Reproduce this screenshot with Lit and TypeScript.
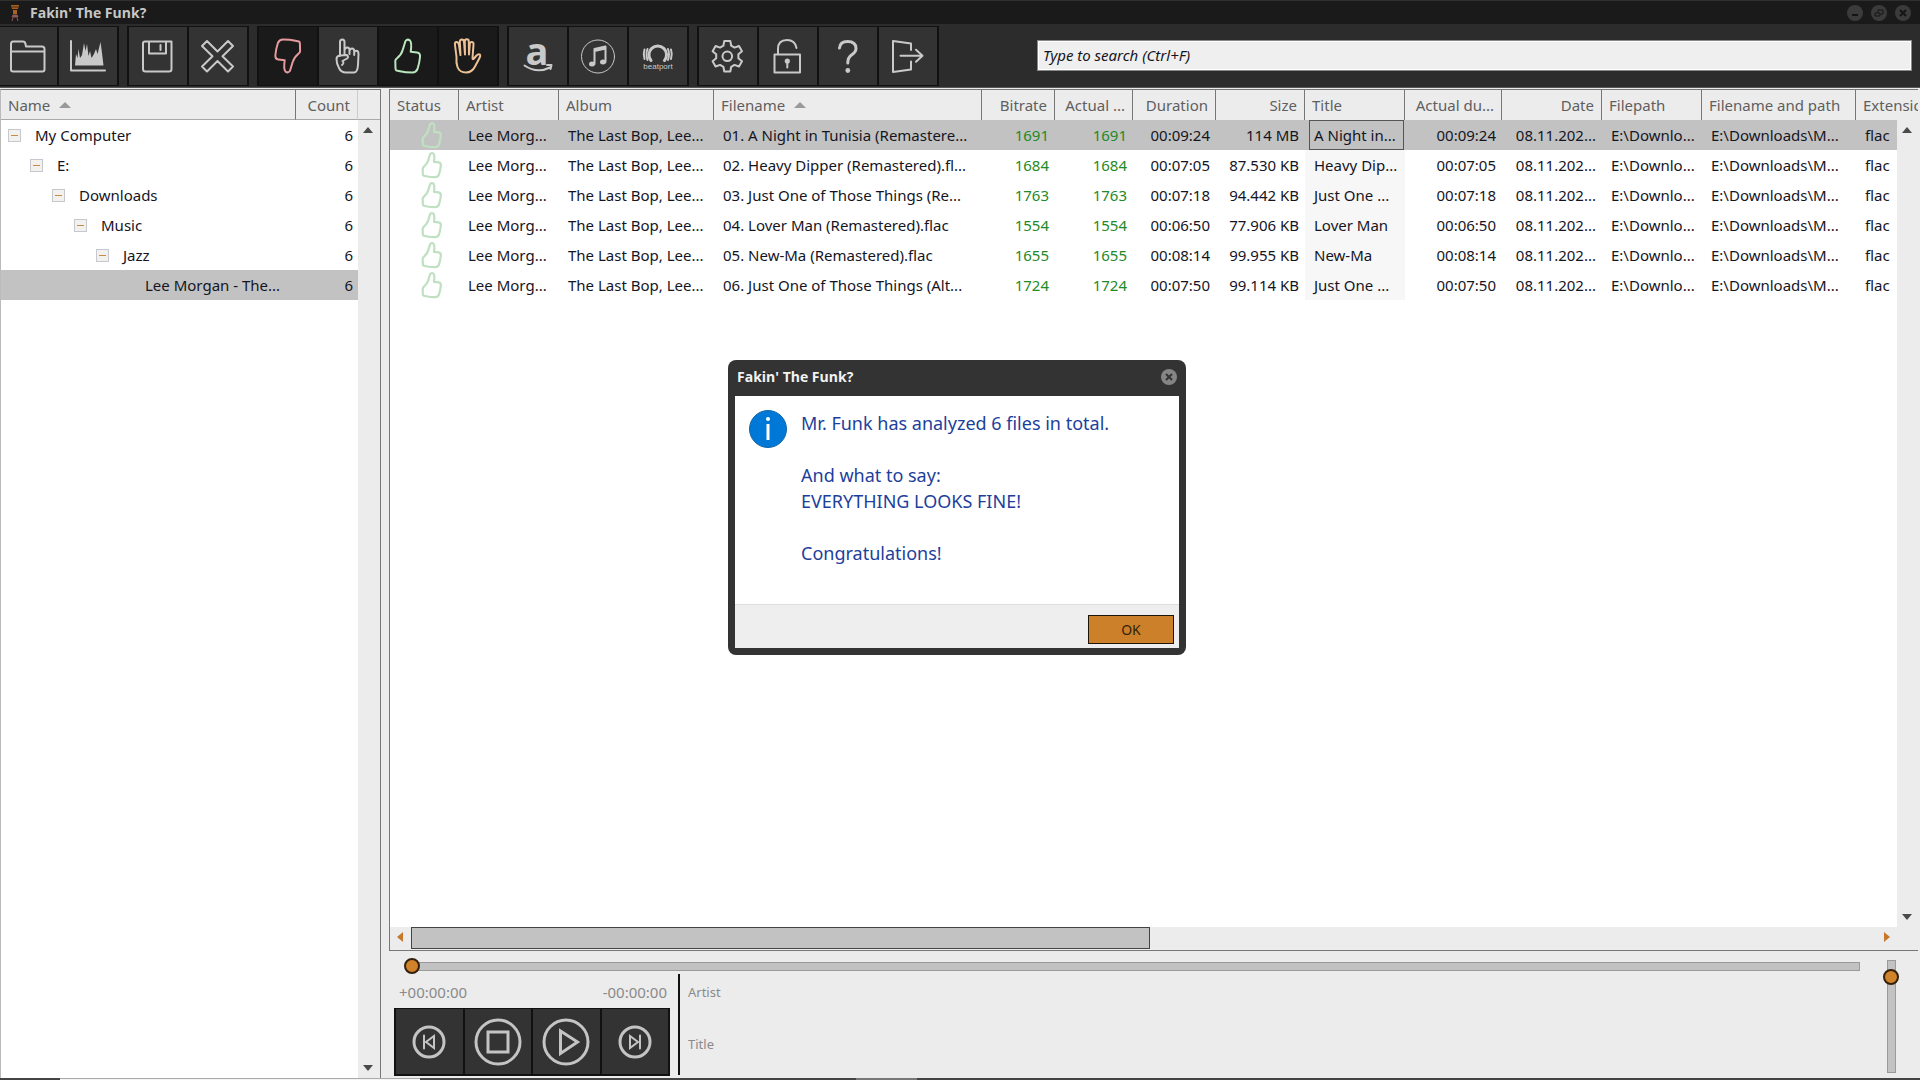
import { LitElement, html, css, svg, nothing } from "lit";
import { customElement, state } from "lit/decorators.js";
import { classMap } from "lit/directives/class-map.js";

const thumbPath = svg`<path d="M26.5 14Q28.5 11.500 31 13.500Q33 16 31.700 24.700L38 25.500Q41.500 26 41 30Q40.500 36 38.500 42Q37 45.500 33.500 45.500Q26 45.500 21 44.300L17.500 43.500Q16.500 43 16.500 41.500L16.300 34Q16.300 32.300 18 31.300Q22.500 27.500 23.700 23Z"/>`;

const icons: Record<string, unknown> = {
  folder: svg`<path d="M11 42.500V17Q11 14.500 13 14.500H23Q25 14.500 25.500 17L26 19.500H42Q44.500 19.500 44.500 22V42.500Q44.500 44.500 42.500 44.500H13Q11 44.500 11 42.500ZM11 24.500H44.500"/>`,
  spectrum: svg`<path d="M12 14V43.500H46"/><path class="solid" d="M16 38.500L17 27L18.500 31L19.500 22L21 31L23 28L25 16L26.500 24L28 17L29.500 29L31 24L32.500 31L35 27L37 22L38.500 27L41.500 15L43 26L44.500 38.500Z"/>`,
  save: svg`<path d="M16 14.500H42.500V42Q42.500 44.500 40 44.500H16.500Q14 44.500 14 42V16.500Q14 14.500 16 14.500ZM20 14.500V26.500H37V14.500M31.500 18V23"/>`,
  cross: svg`<path d="M18 14L28.500 24.500L39 14L44 19L33.500 29.300L44 39.500L39 44.500L28.500 34L18 44.500L13 39.500L23.500 29.300L13 19Z"/>`,
  down: svg`<g transform="rotate(180 28.700 29)">${thumbPath}</g>`,
  up: thumbPath,
  point: svg`<path d="M21 29V15Q21 12.500 23.300 12.500Q25.500 12.500 25.500 15V27M25.500 23Q26 20.500 28.300 20.500Q30.500 20.500 30.500 23V27M30.500 24Q31 21.500 33 21.500Q35.200 21.500 35.200 24V28M35.200 25.500Q36 23.500 37.500 23.800Q39.500 24 39.500 27L39 38Q38.500 45.500 35 45.500H27Q22 45.500 20 41Q17.500 37 17.500 32Q17.500 29 21 28.500L28 28Q30 30 28 31.500L23.500 34Q25.500 36 23 38"/>`,
  hand: svg`<path d="M17.500 30L16 18Q15.500 15 17.500 15Q19.500 15 20 18L21.500 28L20.800 15Q20.800 12.500 22.800 12.500Q24.800 12.500 25 15L26 27.500L25.800 14.500Q25.800 12.300 27.800 12.300Q29.800 12.300 29.800 14.500L30 27.500L30.800 17Q31 14.800 33 15Q34.800 15.200 34.500 17.500L33.500 31Q33.500 33 35 31.500L37.500 28.500Q39.500 26.500 41 27.500Q41.800 28.500 40.500 31L36 39.500Q33 45.500 27 45.500Q20.500 45.500 18.500 40Q17 36 17.500 30"/>`,
  amazon: svg`<text class="solid letter" x="28" y="38" text-anchor="middle">a</text><path class="mid" d="M15.500 38.500Q28 47 41 40.500M38 38L42.500 38L41.500 42"/>`,
  music: svg`<circle class="thin" cx="29" cy="29.500" r="16.500"/><path class="mid" d="M25.500 37V22L36.500 19.500V35M25.500 24L36.500 21.500"/><ellipse class="solid" cx="23" cy="37" rx="3" ry="2.500"/><ellipse class="solid" cx="34" cy="35" rx="3" ry="2.500"/>`,
  beatport: svg`<path class="heavy" d="M22 33.500A8.800 8.800 0 1 1 35.500 33.500"/><path class="mid" d="M18.500 22Q16.500 27 18.500 33M15.500 22.500Q14 27 15.500 32M39 22Q41 27 39 33M42 22.500Q43.500 27 42 32"/><text class="solid word" x="29" y="42" text-anchor="middle">beatport</text>`,
  gear: svg`<path d="M25.300 14H31.300L32.200 18.700L35.500 20.600L40 19L43 24.200L39.400 27.300V31.200L43 34.300L40 39.500L35.500 37.900L32.200 39.800L31.300 44.500H25.300L24.400 39.800L21.100 37.900L16.600 39.500L13.600 34.300L17.200 31.200V27.300L13.600 24.200L16.600 19L21.100 20.600L24.400 18.700Z"/><circle cx="28.300" cy="29.300" r="4.800"/>`,
  lock: svg`<path d="M15.500 27.500H41V45.500H15.500ZM19 27V22Q19 13 28 13Q36 13 37.500 21"/><circle class="solid" cx="28.300" cy="34" r="2.600"/><path d="M28.300 34V40.500"/>`,
  help: svg`<path class="heavy" d="M20.500 21Q21 14.500 28.500 14.500Q37 14.500 37 21.500Q37 25 32.500 28Q28.800 30.500 28.800 36"/><circle class="solid" cx="28.800" cy="43.500" r="2.400"/>`,
  exit: svg`<path d="M32 23V16.500L14 14V45L32 42.500V34.500M21.500 28.700H43M37 22.700L43.500 28.700L37 34.700"/>`,
  prev: svg`<circle cx="29" cy="29" r="15"/><path class="mid" d="M24 22.500V35.500M34 23V35L26 29Z"/>`,
  stop: svg`<circle cx="29" cy="29" r="22"/><path d="M19 19H39V39H19Z"/>`,
  play: svg`<circle cx="29" cy="29" r="22"/><path d="M23.500 18V40.500L40.500 29Z"/>`,
  next: svg`<circle cx="29" cy="29" r="15"/><path class="mid" d="M34 22.500V35.500M24 23V35L32 29Z"/>`,
};

const icon = (name: string) =>
  html`<svg class="icon" viewBox="0 0 58 58" aria-hidden="true">${icons[name]}</svg>`;

interface Tool { icon: string; label: string; tone?: string }

const toolGroups: Tool[][] = [
  [{ icon: "folder", label: "Open folder" }, { icon: "spectrum", label: "Spectrum" }],
  [{ icon: "save", label: "Save" }, { icon: "cross", label: "Remove" }],
  [
    { icon: "down", label: "Show fakes", tone: "red" },
    { icon: "point", label: "Show unsure" },
    { icon: "up", label: "Show good", tone: "green" },
    { icon: "hand", label: "Show unchecked", tone: "tan" },
  ],
  [
    { icon: "amazon", label: "Search Amazon" },
    { icon: "music", label: "Search iTunes" },
    { icon: "beatport", label: "Search Beatport" },
  ],
  [
    { icon: "gear", label: "Settings" },
    { icon: "lock", label: "License" },
    { icon: "help", label: "Help" },
    { icon: "exit", label: "Exit" },
  ],
];

const folders = ["My Computer", "E:", "Downloads", "Music", "Jazz", "Lee Morgan - The..."];

const columns = [
  { name: "Status", width: 69 },
  { name: "Artist", width: 100 },
  { name: "Album", width: 155 },
  { name: "Filename", width: 268, sorted: true },
  { name: "Bitrate", width: 73, right: true },
  { name: "Actual ...", width: 78, right: true },
  { name: "Duration", width: 83, right: true },
  { name: "Size", width: 89, right: true },
  { name: "Title", width: 100 },
  { name: "Actual du...", width: 97, right: true },
  { name: "Date", width: 100, right: true },
  { name: "Filepath", width: 100 },
  { name: "Filename and path", width: 154 },
];

const tracks = [
  { file: "01. A Night in Tunisia (Remastere...", rate: "1691", time: "00:09:24", size: "114 MB", title: "A Night in..." },
  { file: "02. Heavy Dipper (Remastered).fl...", rate: "1684", time: "00:07:05", size: "87.530 KB", title: "Heavy Dip..." },
  { file: "03. Just One of Those Things (Re...", rate: "1763", time: "00:07:18", size: "94.442 KB", title: "Just One ..." },
  { file: "04. Lover Man (Remastered).flac", rate: "1554", time: "00:06:50", size: "77.906 KB", title: "Lover Man" },
  { file: "05. New-Ma (Remastered).flac", rate: "1655", time: "00:08:14", size: "99.955 KB", title: "New-Ma" },
  { file: "06. Just One of Those Things (Alt...", rate: "1724", time: "00:07:50", size: "99.114 KB", title: "Just One ..." },
];

const sortMark = html`<svg class="sort" viewBox="0 0 12 6" aria-hidden="true"><path d="M0 6L6 0L12 6Z"/></svg>`;
const arrow = (d: string, label: string, cls = "") =>
  html`<button class="arrow ${cls}" aria-label=${label}><svg viewBox="0 0 12 12" aria-hidden="true"><path d=${d}/></svg></button>`;
const verticalBar = (what: string) => html`<div class="vbar">
  ${arrow("M1 9L6 3L11 9Z", `Scroll ${what} up`)}
  ${arrow("M1 3L6 9L11 3Z", `Scroll ${what} down`)}
</div>`;
const closeGlyph = svg`<path d="M5 5L11 11M11 5L5 11"/>`;

@customElement("app-root")
export class AppRoot extends LitElement {
  @state() private selected = 0;
  @state() private dialogOpen = true;

  static styles = css`
    :host {
      display: flex; flex-direction: column; position: relative;
      min-height: 100vh; box-sizing: border-box; overflow: hidden;
      background: #ececec; color: #15151f;
      font: 15px/20px "Noto Sans", "Open Sans", sans-serif;
    }
    * { box-sizing: border-box; }
    button, input { font: inherit; margin: 0; }
    button { padding: 0; border: 0; background: none; color: inherit; }
    svg { display: block; }

    .titlebar {
      display: flex; align-items: center; height: 24px; flex: none;
      padding: 0 9px 0 8px; background: #1a1a1a; border-top: 1px solid #303030; color: #c6c6c6;
    }
    .titlebar h1, .dialog h2 { margin: 0; font: 700 14px/20px "Open Sans", "Noto Sans", sans-serif; }
    .titlebar h1 { flex: 1; margin-left: 8px; }
    .logo { width: 14px; height: 20px; }
    .window-buttons { display: flex; gap: 8px; }
    .round { width: 16px; height: 16px; }
    .round svg { width: 16px; height: 16px; fill: #3b3b3b; stroke: #141414; stroke-width: 2; }
    .round circle { stroke: none; }

    .toolbar {
      display: flex; align-items: center; gap: 8px; height: 64px; flex: none;
      padding-right: 8px; background: #2c2c2c; border-bottom: 1px solid #555;
    }
    .group { display: flex; border: solid #111; border-width: 1px 2px 1px 0; }
    .tool { width: 60px; height: 58px; border-left: 2px solid #111; background: #333; color: #c9c9c9; }
    .group:first-child .tool:first-child { width: 57px; border-left: 0; }
    .tool.on { background: #1a1a1a; }
    .red { color: #e79a9d; }
    .green { color: #b9e6bd; }
    .tan { color: #ecc196; }
    .icon {
      width: 58px; height: 58px; margin: 0 auto; overflow: visible; fill: none; stroke: currentColor;
      stroke-width: 2; stroke-linejoin: round; stroke-linecap: round;
    }
    .tool:first-child .icon { margin-left: 0; }
    .solid { fill: currentColor; stroke: none; }
    .thin { stroke-width: 1; }
    .icon .mid { stroke-width: 2; }
    .heavy { stroke-width: 3; }
    .letter { font: 700 38px "Open Sans", sans-serif; }
    .word { font: 8px "Liberation Sans", sans-serif; }
    .search {
      flex: 1; min-width: 0; height: 31px; margin-left: 90px; padding: 0 5px 2px;
      background: #efefef; border: 1px solid #888; outline: 1px solid #fff; outline-offset: -2px;
      border-radius: 0; font-style: italic;
    }
    .search::placeholder { color: #15151f; opacity: 1; }

    .main { flex: 1; display: flex; gap: 8px; min-height: 0; padding-top: 1px; }
    .panel { display: grid; background: #fff; border: solid #777; overflow: hidden; }
    .folders { width: 381px; flex: none; grid-template: 30px 1fr / 1fr 22px; border-width: 1px 1px 0; border-left-color: #bbb; }
    .right { flex: 1; min-width: 0; display: flex; flex-direction: column; }
    .files { flex: 1; grid-template: 30px 1fr 23px / 1fr 21px; border-width: 1px 0 1px 1px; margin-right: 2px; }

    table { grid-area: 1 / 1 / 3 / 3; align-self: start; width: 100%; table-layout: fixed; border-collapse: separate; border-spacing: 0; }
    th, td { height: 30px; overflow: hidden; white-space: nowrap; text-align: left; }
    th { padding: 0 7px; background: #ececec; border-right: 1px solid #777; color: #5f5f5f; font-weight: 400; }
    th:last-child { border-right: 0; padding-right: 0; }
    th.count { border-right-color: #ccc; }
    .folders th { border-bottom: 1px solid #aaa; }
    .sort { display: inline-block; width: 12px; height: 6px; margin-left: 5px; vertical-align: 3px; fill: #999; }
    td { padding: 0 6px 0 9px; }
    .end { text-align: right; }
    th.end, td.end { padding-left: 0; }
    td.status { padding: 0 0 0 15px; }
    td.title { padding: 0; background: #f7f7f7; }
    .selected td, .selected td.title { background: #c2c2c2; }
    .title div { height: 30px; margin: 0 1px 0 4px; padding-left: 4px; border: 1px solid transparent; line-height: 28px; }
    .selected .title div { border-color: #555; }
    .rate { color: #1f8a26; }
    .mini { width: 22px; height: 28px; margin: 0 auto; fill: none; stroke: #bfe0c1; stroke-width: 3; stroke-linejoin: round; }
    .node { display: flex; align-items: center; gap: 14px; height: 30px; }
    .folders td { padding: 0 5px 0 0; }
    .expander { width: 13px; height: 13px; background: #f3f1ee; border: 1px solid #c5c9cf; display: grid; place-items: center; }
    .expander::before { content: ""; width: 7px; height: 1px; background: #c98a45; }
    .leaf { width: 13px; }

    .vbar { grid-area: 2 / 2; display: flex; flex-direction: column; justify-content: space-between; background: #ececec; }
    .arrow { width: 20px; height: 20px; display: grid; place-items: center; }
    .arrow svg { width: 12px; height: 12px; fill: #4a4a4a; }
    .arrow.orange svg { fill: #c8782a; }
    .hbar { grid-area: 3 / 1 / 4 / 3; display: grid; grid-template-columns: 21px 1fr 20px 21px; background: #ececec; }
    .track { display: grid; grid-template-columns: 61fr 60fr; }
    .thumb { height: 22px; background: #c2c2c2; border: 1px solid #444; }

    .player { height: 127px; flex: none; display: grid; grid-template-columns: 1fr 60px; }
    .deck { display: flex; flex-direction: column; padding-left: 5px; }
    .seek, .volume { appearance: none; cursor: default; }
    .seek {
      height: 16px; margin: 7px 0 0 10px;
      background:
        linear-gradient(#c2c2c2, #c2c2c2) 8px 50% / calc(100% - 9px) 7px no-repeat,
        linear-gradient(#9a9a9a, #9a9a9a) 8px 50% / calc(100% - 8px) 9px no-repeat;
    }
    .volume {
      writing-mode: vertical-lr; direction: rtl; width: 16px; height: 113px; margin: 9px 0 0 23px;
      background:
        linear-gradient(#c2c2c2, #c2c2c2) 50% 50% / 7px calc(100% - 2px) no-repeat,
        linear-gradient(#9a9a9a, #9a9a9a) 50% 50% / 9px 100% no-repeat;
    }
    .seek::-webkit-slider-thumb, .volume::-webkit-slider-thumb {
      appearance: none; width: 16px; height: 16px; border: 2px solid #33210c; border-radius: 50%; background: #d0832a;
    }
    .transport { display: flex; gap: 8px; }
    .controls { width: 276px; }
    .times { display: flex; justify-content: space-between; height: 34px; padding: 8px 3px 0 5px; color: #8a8a8a; }
    .keys { display: flex; border: 2px solid #111; border-left: 0; border-top-width: 1px; }
    .key { flex: 1; height: 65px; border-left: 2px solid #111; background: #333; color: #c4c4c4; }
    .key .icon { stroke-width: 3; stroke-linejoin: miter; }
    .tags { display: flex; flex-direction: column; gap: 32px; height: 101px; padding: 8px 0 0 8px; border-left: 2px solid #111; color: #8a8a8a; font-size: 13px; }

    .bottom { display: flex; height: 2px; flex: none; background: #444; }
    .bottom i:nth-child(1) { width: 60px; }
    .bottom i:nth-child(2) { width: 360px; background: #f4f4f4; border-top: 1px solid #aaa; }
    .bottom i:nth-child(3) { width: 436px; }
    .bottom i:nth-child(4) { width: 61px; background: #777; }

    .overlay { position: absolute; inset: 0; display: grid; place-items: center; padding: 0 6px 65px 0; }
    .dialog { width: 458px; padding: 0 7px 7px; background: #333; border-radius: 8px; }
    .dialog header { display: flex; align-items: center; justify-content: space-between; height: 36px; padding: 0 2px 2px; }
    .dialog h2 { color: #f2f2f2; }
    .dialog .round svg { fill: #858585; stroke: #333; }
    .message { display: flex; gap: 14px; height: 208px; padding: 14px; background: #fff; color: #1d3f9c; font-size: 18px; line-height: 26px; }
    .message p { margin: 0 0 26px; }
    .info { width: 38px; height: 38px; flex: none; }
    .dialog footer { display: flex; justify-content: flex-end; height: 44px; padding: 10px 5px 0; background: #eee; border-top: 1px solid #ddd; }
    .ok { width: 86px; height: 29px; background: #cb8029; border: 1px solid #1e1609; color: #33220d; font-size: 14px; }
  `;

  private renderTree() {
    return html`<section class="panel folders">
      <table>
        <colgroup><col /><col style="width:62px" /><col style="width:22px" /></colgroup>
        <thead><tr><th>Name ${sortMark}</th><th class="end count">Count</th><th></th></tr></thead>
        <tbody>
          ${folders.map((name, depth) => html`<tr class=${classMap({ selected: depth === folders.length - 1 })}>
            <td><div class="node" style="padding-left:${7 + depth * 22}px">
              ${depth < folders.length - 1
                ? html`<button class="expander" aria-label="Collapse ${name}"></button>`
                : html`<span class="leaf"></span>`}
              ${name}</div></td>
            <td class="end">6</td>
          </tr>`)}
        </tbody>
      </table>
      ${verticalBar("folders")}
    </section>`;
  }

  private renderFiles() {
    return html`<section class="panel files">
      <table>
        <colgroup>${columns.map((c) => html`<col style="width:${c.width}px" />`)}<col /><col style="width:21px" /></colgroup>
        <thead><tr>
          ${columns.map((c) => html`<th class=${classMap({ end: !!c.right })}>${c.name} ${c.sorted ? sortMark : nothing}</th>`)}
          <th colspan="2">Extension</th>
        </tr></thead>
        <tbody>
          ${tracks.map((t, i) => html`<tr class=${classMap({ selected: i === this.selected })} @click=${() => (this.selected = i)}>
            <td class="status"><svg class="mini" viewBox="14 10 30 38" role="img" aria-label="Good">${thumbPath}</svg></td>
            <td>Lee Morg...</td>
            <td>The Last Bop, Lee...</td>
            <td>${t.file}</td>
            <td class="end rate">${t.rate}</td>
            <td class="end rate">${t.rate}</td>
            <td class="end">${t.time}</td>
            <td class="end">${t.size}</td>
            <td class="title"><div>${t.title}</div></td>
            <td class="end">${t.time}</td>
            <td class="end">08.11.202...</td>
            <td>E:\\Downlo...</td>
            <td>E:\\Downloads\\M...</td>
            <td>flac</td>
          </tr>`)}
        </tbody>
      </table>
      ${verticalBar("files")}
      <div class="hbar">
        ${arrow("M9 1L3 6L9 11Z", "Scroll left", "orange")}
        <div class="track"><div class="thumb"></div></div>
        ${arrow("M3 1L9 6L3 11Z", "Scroll right", "orange")}
      </div>
    </section>`;
  }

  private renderPlayer() {
    return html`<section class="player">
      <div class="deck">
        <input class="seek" type="range" min="0" max="100" value="0" aria-label="Position" />
        <div class="transport">
          <div class="controls">
            <div class="times"><span>+00:00:00</span><span>-00:00:00</span></div>
            <div class="keys">
              ${[["prev", "Previous"], ["stop", "Stop"], ["play", "Play"], ["next", "Next"]].map(
                ([name, label]) => html`<button class="key" aria-label=${label}>${icon(name)}</button>`)}
            </div>
          </div>
          <div class="tags"><span>Artist</span><span>Title</span></div>
        </div>
      </div>
      <input class="volume" type="range" min="0" max="100" value="91" aria-label="Volume" />
    </section>`;
  }

  private renderDialog() {
    return html`<div class="overlay">
      <section class="dialog" role="dialog" aria-labelledby="dialog-title">
        <header>
          <h2 id="dialog-title">Fakin' The Funk?</h2>
          <button class="round" aria-label="Close message" @click=${() => (this.dialogOpen = false)}>
            <svg viewBox="0 0 16 16" aria-hidden="true"><circle cx="8" cy="8" r="8" />${closeGlyph}</svg>
          </button>
        </header>
        <div class="message">
          <svg class="info" viewBox="0 0 38 38" aria-hidden="true">
            <circle cx="19" cy="19" r="18.500" fill="#0078d7" stroke="#1467a8" />
            <circle cx="19" cy="9" r="2" fill="#fff" /><path d="M19 14V30" stroke="#fff" stroke-width="3" />
          </svg>
          <div>
            <p>Mr. Funk has analyzed 6 files in total.</p>
            <p>And what to say:<br />EVERYTHING LOOKS FINE!</p>
            <p>Congratulations!</p>
          </div>
        </div>
        <footer><button class="ok" @click=${() => (this.dialogOpen = false)}>OK</button></footer>
      </section>
    </div>`;
  }

  render() {
    return html`
      <header class="titlebar">
        <svg class="logo" viewBox="0 0 14 20" aria-hidden="true">
          <path d="M3 2H11L10 6H4ZM5 7H9V11H5Z" fill="#a8611f" /><path d="M4 4H10" stroke="#4a2a10" />
          <path d="M5 12H9L10 14H4ZM5 15L4 18M9 15L10 18" fill="#8d5a58" stroke="#8d5a58" />
        </svg>
        <h1>Fakin' The Funk?</h1>
        <div class="window-buttons">
          <button class="round" aria-label="Minimize"><svg viewBox="0 0 16 16"><circle cx="8" cy="8" r="8" /><path d="M5 10H11" /></svg></button>
          <button class="round" aria-label="Restore"><svg viewBox="0 0 16 16"><circle cx="8" cy="8" r="8" /><path d="M7 7V5H12V9H10M4 8H9V11H4Z" stroke-width="1" /></svg></button>
          <button class="round" aria-label="Close"><svg viewBox="0 0 16 16"><circle cx="8" cy="8" r="8" />${closeGlyph}</svg></button>
        </div>
      </header>
      <nav class="toolbar">
        ${toolGroups.map((group) => html`<div class="group">
          ${group.map((t) => html`<button class="tool ${t.tone ? `on ${t.tone}` : ""}" aria-label=${t.label}>${icon(t.icon)}</button>`)}
        </div>`)}
        <input class="search" type="text" placeholder="Type to search (Ctrl+F)" aria-label="Search" />
      </nav>
      <main class="main">
        ${this.renderTree()}
        <div class="right">${this.renderFiles()}${this.renderPlayer()}</div>
      </main>
      <div class="bottom"><i></i><i></i><i></i><i></i></div>
      ${this.dialogOpen ? this.renderDialog() : nothing}
    `;
  }
}
